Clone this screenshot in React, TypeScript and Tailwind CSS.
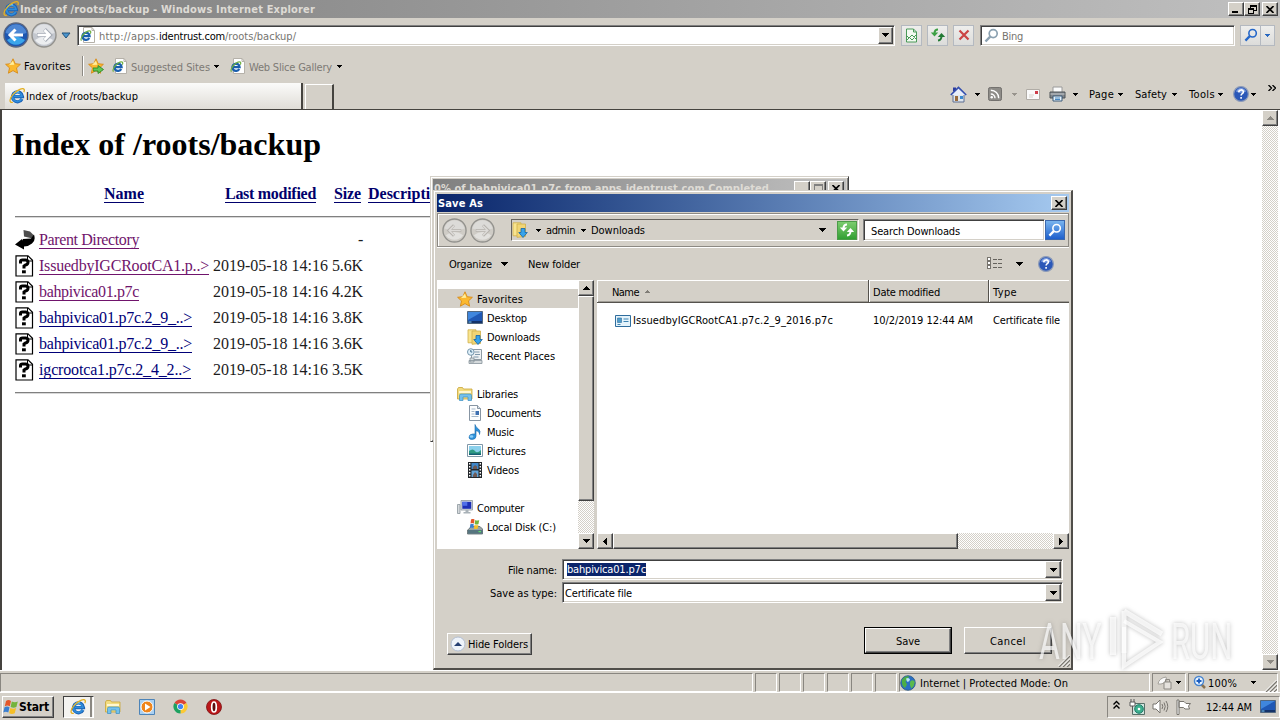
import { useLayoutEffect, useRef, useState } from "react";
import type { ReactNode } from "react";

const UI = "font-['DejaVu_Sans_Condensed','DejaVu_Sans','Noto_Sans',sans-serif]";
const SERIF = "font-['Liberation_Serif',serif]";
const RAISED =
  "bg-[#d4d0c8] border border-t-white border-l-white border-r-[#404040] border-b-[#404040] shadow-[inset_-1px_-1px_0_#808080]";
const SUNKEN =
  "bg-white border border-t-[#808080] border-l-[#808080] border-r-white border-b-white shadow-[inset_1px_1px_0_#404040,inset_-1px_-1px_0_#d4d0c8]";
const DITHER = "bg-[repeating-conic-gradient(#ffffff_0_25%,#d4d0c8_0_50%)] bg-[length:2px_2px]";

/* Text run that is tracked to occupy exactly w pixels. */
function T({ w, className = "", children }: { w: number; className?: string; children: ReactNode }) {
  const ref = useRef<HTMLSpanElement>(null);
  const [spacing, setSpacing] = useState(0);
  useLayoutEffect(() => {
    const el = ref.current;
    if (!el) return;
    const count = el.textContent?.length || 1;
    setSpacing((w - el.getBoundingClientRect().width) / count);
  }, [w]);
  return (
    <span ref={ref} className={`inline-block shrink-0 whitespace-pre ${className}`} style={{ letterSpacing: spacing }}>
      {children}
    </span>
  );
}

function Tri({ dir = "down", className = "text-black" }: { dir?: "down" | "up" | "left" | "right"; className?: string }) {
  const d = {
    down: "M0 0h7L3.5 4z",
    up: "M0 4h7L3.5 0z",
    left: "M4 0v7L0 3.5z",
    right: "M0 0v7l4-3.5z",
  }[dir];
  const side = dir === "left" || dir === "right";
  return (
    <svg className={`shrink-0 ${className}`} width={side ? 4 : 7} height={side ? 7 : 4} fill="currentColor" shapeRendering="crispEdges">
      <path d={d} />
    </svg>
  );
}

function SmallTri({ className = "" }: { className?: string }) {
  return (
    <svg className={`shrink-0 ${className}`} width="5" height="3" fill="currentColor" shapeRendering="crispEdges">
      <path d="M0 0h5L2.5 3z" />
    </svg>
  );
}

function IE({ size = 16 }: { size?: number }) {
  return (
    <svg className="shrink-0" width={size} height={size} viewBox="0 0 16 16" fill="none">
      <path d="M13 11A5 5 0 1 1 13.500 8.600H4.600" stroke="#1c62b4" strokeWidth="3.200" />
      <path d="M12.700 10.600A4.700 4.700 0 1 1 13 8.300H5" stroke="#2f8ddb" strokeWidth="1.700" />
      <path d="M4.200 6.600a4.400 4.400 0 0 1 5.800-2.600" stroke="#7fd0f8" strokeWidth="1.200" />
      <path d="M3.800 14.300C-.2 15.200.2 10.200 4.800 5.600S14.200-.4 15.200 1.500c.3.800.1 1.600-.4 2.600" stroke="#e3b023" strokeWidth="1.300" />
    </svg>
  );
}

function IEPage() {
  return (
    <svg className="shrink-0" width="16" height="16" viewBox="0 0 16 16" fill="none">
      <path d="M3.500.5h8.500l2.500 3v12h-11z" fill="#fff" stroke="#b5b1a9" />
      <path d="M12 .5v3h2.500" stroke="#b5b1a9" />
      <path d="M9.200 11A3.600 3.600 0 1 1 9.600 9.200H3.400" stroke="#1b5fae" strokeWidth="2.300" />
      <path d="M1.600 13.600C-.2 12.400 2.600 7.200 6.300 5S11.600 4.200 10.300 6.600" stroke="#6cae3e" strokeWidth="1.200" />
    </svg>
  );
}

function Star({ size = 16 }: { size?: number }) {
  return (
    <svg className="shrink-0" width={size} height={size} viewBox="0 0 16 16">
      <path d="M8 .8l2.200 4.900 5.200.6-3.900 3.600 1.100 5.300L8 12.600l-4.600 2.600 1.100-5.300L.6 6.300l5.200-.6z" fill="#fbb92f" stroke="#d78a17" strokeWidth=".9" />
      <path d="M8 2.800l1.300 3.900L4 7z" fill="#ffef9c" />
    </svg>
  );
}

function Folder({ arrow = false, library = false }: { arrow?: boolean; library?: boolean }) {
  return (
    <svg className="shrink-0" width="16" height="16" viewBox="0 0 16 16">
      {library ? (
        <>
          <path d="M.5 3l1-1.500h4l1 1.500h8.500V13H.5z" fill="#f2dc80" stroke="#c9a437" strokeWidth=".8" />
          <path d="M2 5h12v2H2z" fill="#fff7cf" />
          <path d="M2.500 14.500V9.500q0-1.500 1.500-1.500h9q1.500 0 1.500 1.500v5h-3.500V11H6v3.500z" fill="#74c1ec" stroke="#3b8fc2" strokeWidth=".7" />
        </>
      ) : (
        <>
          <path d="M1 .8h8v13H1z" fill="#f8e48f" stroke="#cfaf49" strokeWidth=".8" />
          <path d="M5 2h8.500v12.500L5 15.300z" fill="#f1d575" stroke="#cfaf49" strokeWidth=".8" />
        </>
      )}
      {arrow && <path d="M9 6.500h4v4h2.300L11 15.500 6.800 10.500H9z" fill="#37a3ea" stroke="#1464a8" strokeWidth=".8" />}
    </svg>
  );
}

function Help() {
  return (
    <svg className="shrink-0" width="16" height="16" viewBox="0 0 16 16">
      <circle cx="8" cy="8" r="7.400" fill="#2b58b8" stroke="#8d9bb8" strokeWidth="1.200" />
      <path d="M3 5.500a5.300 5.300 0 0 1 10 0Q8 8 3 5.500z" fill="#7f9fe0" />
      <path d="M5.800 6.200c0-3 4.600-3 4.600-.2 0 1.700-2.300 1.700-2.300 3.500M8.100 11v1.700" stroke="#fff" strokeWidth="1.600" fill="none" />
    </svg>
  );
}

function Lens({ color = "#2467c9", size = 15 }: { color?: string; size?: number }) {
  return (
    <svg className="shrink-0" width={size} height={size} viewBox="0 0 15 15" fill="none">
      <circle cx="9.200" cy="5.600" r="4" stroke={color} strokeWidth="1.700" />
      <path d="M6.200 8.700L1.500 13.500" stroke={color} strokeWidth="2.400" />
    </svg>
  );
}

function Swap({ a, b }: { a: string; b: string }) {
  return (
    <svg className="shrink-0" width="16" height="14" viewBox="0 0 16 14">
      <path d="M8 1.500Q4.500 1.500 4.500 5.500" fill="none" stroke={a} strokeWidth="2" />
      <path d="M.8 4.500h7.400L4.500 8.500z" fill={a} />
      <path d="M7.800 9h7.400L11.500 5z" fill={b} />
      <path d="M11.500 8q0 4-3.500 4.500" fill="none" stroke={b} strokeWidth="2" />
    </svg>
  );
}

function Orb({ blue = false, size = 26, muted = false, back = false }: { blue?: boolean; size?: number; muted?: boolean; back?: boolean }) {
  const fill = blue ? "#1d56b0" : muted ? "#cfccc6" : "#c3c7ce";
  const upper = blue ? "#4d86d3" : muted ? "#dcdbd8" : "#dfe1e4";
  const lower = blue ? "#3aa5ea" : muted ? "#e2e1de" : "#eceef0";
  return (
    <svg className="shrink-0" width={size} height={size} viewBox="0 0 26 26">
      <circle cx="13" cy="13" r="12" fill={fill} stroke={blue ? "#5a6680" : "#93928e"} strokeWidth="1.400" />
      <path d="M2.500 11a10.700 10.700 0 0 1 21 0q-10 4-21 0z" fill={upper} />
      <path d="M4 18q9-7 18 0a11 11 0 0 1-18 0z" fill={lower} />
      <path
        d={back ? "M20 13H8M12.500 7.500L7 13l5.500 5.500" : "M6 13h12M13.500 7.500L19 13l-5.500 5.500"}
        fill="none"
        stroke={muted ? "#b5b2ad" : blue ? "#fff" : "#a3a9b3"}
        strokeWidth={blue ? 3 : muted ? 3 : 4}
      />
      {!blue && (
        <path
          d={back ? "M19.500 13H8M12.500 8L7.500 13l5 5" : "M6.500 13h12M13.500 8l5 5-5 5"}
          fill="none"
          stroke={muted ? "#dddbd8" : "#fff"}
          strokeWidth={muted ? 1.6 : 2.6}
        />
      )}
    </svg>
  );
}

function FlagLogo({ size = 16 }: { size?: number }) {
  return (
    <svg className="shrink-0" width={size} height={size} viewBox="0 0 16 16">
      <path d="M3 2q2.500-1.800 5 0L6.800 7.300q-2.300-1.700-5 0z" fill="#e4572a" />
      <path d="M8.800 2.500q3 1.600 6 0L13.400 8q-2.800 1.500-5.800 0z" fill="#74b43b" />
      <path d="M1.500 8.300q2.600-1.600 5 0L5.300 13.500q-2.600-1.700-5 0z" fill="#3a7fd0" />
      <path d="M7.300 9q3 1.500 5.800 0l-1.400 5.300q-2.800 1.500-5.600 0z" fill="#f5bf28" />
    </svg>
  );
}

function Desktop() {
  return (
    <svg className="shrink-0" width="16" height="13" viewBox="0 0 16 13">
      <path d="M.5.5h15v12H.5z" fill="#1f58b5" stroke="#51677f" />
      <path d="M1 1h14L1 9z" fill="#3f86dd" />
      <path d="M1 10h14v2H1z" fill="#14336a" />
      <path d="M1.500 10.500h3v1h-3z" fill="#7fd3ff" />
    </svg>
  );
}

function Recent() {
  return (
    <svg className="shrink-0" width="16" height="16" viewBox="0 0 16 16">
      <path d="M4.500 1.500h10v10h-10z" fill="#eef1f3" stroke="#8f9ba3" />
      <path d="M7.500 4h5M8 6.500h5M6.500 9h5" stroke="#7e97aa" />
      <circle cx="3.800" cy="4" r="3.300" fill="#dff0fa" stroke="#7797ad" />
      <path d="M3.800 2v2h1.500" stroke="#3f6a88" fill="none" />
      <path d="M2 12.500h13v3H2zM3 10h4v4H3z" fill="#d5dadc" stroke="#87939a" strokeWidth=".8" />
    </svg>
  );
}

function Doc() {
  return (
    <svg className="shrink-0" width="16" height="16" viewBox="0 0 16 16">
      <path d="M2.500.5h8l3 3v12h-11z" fill="#fcfdfe" stroke="#8795a3" />
      <path d="M10.500.5v3h3" fill="#dbe4ec" stroke="#8795a3" />
      <path d="M4.500 4h4M4.500 6.500h3M4.500 9h3M4.500 11.500h7" stroke="#a5b8c9" />
      <path d="M8.500 6h3.500v4H8.500z" fill="#3c6fb0" />
    </svg>
  );
}

function Music() {
  return (
    <svg className="shrink-0" width="16" height="16" viewBox="0 0 16 16">
      <path d="M8 .5q.5 2.500 3.500 4.500 2.500 2 1 5.500.3-3-3.500-3.800v5.500q0 3-3.800 3.300-3.200 0-3.200-2.300 0-3 4-3.300 1.200 0 2 .1z" fill="#2f93dc" stroke="#1c6aa9" strokeWidth=".6" />
      <ellipse cx="4.500" cy="12.500" rx="1.800" ry="1.200" fill="#8cd0f8" />
    </svg>
  );
}

function Pictures() {
  return (
    <svg className="shrink-0" width="16" height="13" viewBox="0 0 16 13">
      <path d="M.5.5h15v12H.5z" fill="#fff" stroke="#7f97a8" />
      <path d="M2 2h12v9H2z" fill="#8ad0ec" />
      <path d="M2 7q4-3 6 0t6-1v5H2z" fill="#2e9a83" />
      <path d="M2 9.500h12V11H2z" fill="#155f74" />
    </svg>
  );
}

function Videos() {
  return (
    <svg className="shrink-0" width="14" height="16" viewBox="0 0 14 16">
      <path d="M0 0h14v16H0z" fill="#23272b" />
      <path d="M3.500 1h7v6h-7z" fill="#3f86c8" />
      <path d="M3.500 8.500h7V15h-7z" fill="#63a4d8" />
      <path d="M5 5l2-2 2 1.500V7H5zM5 13l2-3 2 2v3H5z" fill="#6f5a55" />
      <path d="M1.700 1v14M12.300 1v14" stroke="#fff" strokeWidth="1.400" strokeDasharray="1.500 1.500" />
    </svg>
  );
}

function Computer() {
  return (
    <svg className="shrink-0" width="16" height="15" viewBox="0 0 16 15">
      <path d="M.5 4.500h2.500v9H.5z" fill="#d6dadd" stroke="#8b959c" strokeWidth=".8" />
      <path d="M4 .5h11.500v9.500H4z" fill="#dde1e4" stroke="#8b959c" strokeWidth=".8" />
      <path d="M5.300 1.800h9v7h-9z" fill="#1c2fb5" />
      <path d="M5.300 1.800h5v4h-5z" fill="#4f6fe8" />
      <path d="M8.500 10h3v2h2v1.500h-7V12h2z" fill="#a9b2b8" />
    </svg>
  );
}

function Disk() {
  return (
    <svg className="shrink-0" width="16" height="16" viewBox="0 0 16 16">
      <path d="M2 10l2-2.500h9L15.500 10v5H.5v-4z" fill="#98a4a6" stroke="#5c696c" strokeWidth=".8" />
      <path d="M1 11h14.500v3.700H1z" fill="#56757f" />
      <path d="M11.500 12h2.500v1.200h-2.500z" fill="#5ee06a" />
      <path d="M4 .5q1.800-1.200 3.500 0L7 4.500q-1.800-1-3.500 0z" fill="#e4572a" />
      <path d="M8.200 1q2 1 4 0L11.500 5q-2 1-3.800 0z" fill="#74b43b" />
      <path d="M3.300 5.200q1.700-1 3.500 0l-.5 3.800q-1.800-1-3.500 0z" fill="#3a7fd0" />
      <path d="M7.500 5.800q2 1 4 0l-.8 3.700q-2 1-3.800 0z" fill="#f5bf28" />
    </svg>
  );
}

function Globe() {
  return (
    <svg className="shrink-0" width="16" height="16" viewBox="0 0 16 16">
      <circle cx="8" cy="8" r="7.300" fill="#2a6fc4" stroke="#2b5580" strokeWidth=".8" />
      <path d="M2 5Q5 .5 9 1.500 8 5 5.500 6.500L7 9.500 5 13Q1 10 2 5z" fill="#4cae45" />
      <path d="M10.500 6q3-2 4.300 1-.3 4-3.300 6.500Q9 10 10.500 6z" fill="#5cba4c" />
      <path d="M6 3.500q3-1.500 4 1-1 3-3 2z" fill="#b9e6f8" />
    </svg>
  );
}

function Unknown() {
  return (
    <svg className="shrink-0" width="20" height="22" viewBox="0 0 20 22">
      <path d="M1 .8h12l4.500 4.500V21H1z" fill="#fff" stroke="#000" strokeWidth="1.200" />
      <path d="M12.500 1v5h5" fill="none" stroke="#000" />
      <path d="M5.500 8.500V6.500Q5.500 5 7.500 5h3q2.500 0 2.500 2.300T10.500 10L9 11v2.500" fill="none" stroke="#000" strokeWidth="3" />
      <path d="M7 15.300h3.800v3H7z" />
    </svg>
  );
}

function Back() {
  return (
    <svg className="shrink-0" width="20" height="22" viewBox="0 0 20 22">
      <path d="M8.500 1l6.500 1.500 4 4-1.500 3-8.500-2z" fill="#4c4c4c" />
      <path d="M19 5.500q2 6-2 9-3.500 3-8 3v3L0 15.500 7 10v3q-.5-1.500 1-3l8-.5z" fill="#000" />
    </svg>
  );
}

function CertFile() {
  return (
    <svg className="shrink-0" width="16" height="12" viewBox="0 0 16 12">
      <path d="M.5.500h15v11H.5z" fill="#e4f3fb" stroke="#2f6d9d" />
      <path d="M2.500 3h4v4.500h-4z" fill="#4f9cc9" stroke="#2f6d9d" strokeWidth=".6" />
      <path d="M8.500 4h5M8.500 6.500h5M2.500 9.500h3" stroke="#3d83b2" />
    </svg>
  );
}

function Close({ size = 8 }: { size?: number }) {
  return (
    <svg width={size} height="7" viewBox="0 0 8 7">
      <path d="M.5 0L7.500 7M7.500 0L.5 7" stroke="#000" strokeWidth="1.600" />
    </svg>
  );
}

function TitleBar() {
  return (
    <div className="flex h-[18px] shrink-0 items-center bg-gradient-to-r from-[#808080] to-[#c0c0c0] pl-[3px] pr-[2px]">
      <IE />
      <T w={295} className="ml-px text-[11px] font-bold text-[#dedbd5]">Index of /roots/backup - Windows Internet Explorer</T>
      <div className="ml-auto flex h-[14px]">
        <div className={`flex w-[16px] items-end justify-start pb-[2px] pl-[3px] ${RAISED}`}><div className="h-[2px] w-[6px] bg-black" /></div>
        <div className={`flex w-[16px] items-center justify-center ${RAISED}`}>
          <svg width="9" height="9" shapeRendering="crispEdges">
            <path d="M2 0h7v6H6v3H0V3h2zM3 2v1h3v2h2V2zM1 5v3h4V5z" fillRule="evenodd" />
          </svg>
        </div>
        <div className={`ml-[2px] flex w-[16px] items-center justify-center ${RAISED}`}><Close /></div>
      </div>
    </div>
  );
}

const NAVBTN = "flex h-[21px] items-center justify-center border border-[#b4b9c0] bg-gradient-to-b from-[#eeeeec] to-[#dcdcda]";

function NavRow() {
  return (
    <div className="flex h-[33px] shrink-0 items-center pl-[3px] pt-[1px]">
      <Orb blue back />
      <div className="ml-[2px] flex"><Orb /></div>
      <svg className="ml-[4px] shrink-0" width="10" height="7"><path d="M1 1h8L5 6z" fill="#4b96cf" stroke="#23537d" /></svg>
      <div className={`ml-[6px] flex h-[21px] w-[818px] items-center pl-[2px] pr-px ${SUNKEN}`}>
        <IEPage />
        <T w={60} className="ml-[3px] pt-[2px] text-[11px] text-[#76746f]">http://apps.</T>
        <T w={66} className="pt-[2px] text-[11px] text-black">identrust.com</T>
        <T w={71} className="pt-[2px] text-[11px] text-[#76746f]">/roots/backup/</T>
        <div className={`ml-auto flex h-[17px] w-[15px] items-center justify-center ${RAISED}`}><Tri /></div>
      </div>
      <div className={`ml-[6px] w-[21px] ${NAVBTN}`}>
        <svg width="13" height="15" fill="none"><path d="M1.500 1h7l3 3v10h-10z" fill="#f3faf1" stroke="#4a9a58" /><path d="M8.500 1v3h3M2 8l2 2 3-3 2 2 2-2M2 12l2.500-2.500L7 12l2.500-2.500L11 11" stroke="#4a9a58" /></svg>
      </div>
      <div className={`ml-[5px] w-[21px] ${NAVBTN}`}><Swap a="#3da044" b="#227a34" /></div>
      <div className={`ml-[5px] w-[21px] ${NAVBTN}`}>
        <svg width="12" height="12"><path d="M1.500 1.500l9 9M10.500 1.500l-9 9" stroke="#cb4545" strokeWidth="2.200" /></svg>
      </div>
      <div className={`ml-[6px] flex h-[21px] w-[255px] items-center pl-[3px] ${SUNKEN}`}>
        <Lens color="#8ba1b1" />
        <T w={21} className="ml-[3px] pt-[2px] text-[11px] text-[#76746f]">Bing</T>
      </div>
      <div className={`ml-[5px] w-[21px] ${NAVBTN}`}><Lens size={14} /></div>
      <div className={`w-[14px] border-l-0 ${NAVBTN}`}><SmallTri className="text-[#2868c0]" /></div>
    </div>
  );
}

function FavRow() {
  return (
    <div className="flex h-[30px] shrink-0 items-center pl-[5px] text-[11px] text-[#7d7a75]">
      <Star />
      <T w={47} className="ml-[3px] text-black">Favorites</T>
      <div className="ml-[11px] h-[20px] w-[2px] border-l border-[#8c8983] bg-white" />
      <div className="ml-[4px] flex items-center">
        <Star />
        <svg className="-ml-[11px] mt-[6px]" width="11" height="9"><path d="M0 3h5V.5L10.500 4.500 5 8.500V6H0z" fill="#62c653" stroke="#2c8a28" strokeWidth=".9" /></svg>
      </div>
      <div className="ml-[8px] flex"><IEPage /></div>
      <T w={79} className="ml-[3px] pt-[2px]">Suggested Sites</T>
      <SmallTri className="ml-[4px] text-black" />
      <div className="ml-[11px] flex"><IEPage /></div>
      <T w={83} className="ml-[3px] pt-[2px]">Web Slice Gallery</T>
      <SmallTri className="ml-[5px] text-black" />
    </div>
  );
}

function Printer() {
  return (
    <svg className="shrink-0" width="17" height="16" viewBox="0 0 17 16">
      <path d="M4 1h9v6H4z" fill="#fbfbfb" stroke="#9a9a9a" />
      <path d="M1 6h15v6H1z" fill="#80868c" stroke="#4f5459" />
      <path d="M1.500 8h14" stroke="#c6cace" />
      <path d="M4 10h9v5H4z" fill="#e4f2fb" stroke="#3c5b78" />
      <path d="M6 12h5M6 13.500h5" stroke="#4a88c0" />
    </svg>
  );
}

function TabRow() {
  return (
    <div className="flex h-[28px] shrink-0 items-end pl-[5px] text-[11px]">
      <div className="flex h-[26px] w-[298px] items-center border-r-2 border-[#45433f] bg-gradient-to-b from-[#fbfbfa] to-[#e0ddd7] pl-[4px]">
        <IE />
        <T w={112} className="ml-px">Index of /roots/backup</T>
      </div>
      <div className="ml-[2px] h-[25px] w-[29px] border border-b-0 border-r-2 border-t-white border-l-white border-r-[#45433f]" />
      <div className="mb-[1px] ml-[616px] flex h-[28px] items-center">
        <svg className="shrink-0" width="17" height="17" viewBox="0 0 17 17">
          <path d="M3 8v8h11V8" fill="#dfe6ee" stroke="#5d6f92" />
          <path d="M3 1.500h3v4H3z" fill="#2c3ca0" />
          <path d="M.8 9l7.700-7.500L16.200 9" fill="#e8eefa" stroke="#354fae" strokeWidth="1.700" />
          <path d="M5 10h3v5H5z" fill="#9a6b3b" /><path d="M10 10h3v3h-3z" fill="#3a89d0" />
        </svg>
        <SmallTri className="ml-[8px]" />
        <svg className="ml-[8px] shrink-0" width="14" height="14" viewBox="0 0 15 15">
          <rect x=".5" y=".5" width="14" height="14" rx="2" fill="#8e8c88" stroke="#6d6b68" />
          <path d="M3 7.500a4.500 4.500 0 0 1 4.500 4.500M3 3.500A8.500 8.500 0 0 1 11.500 12" fill="none" stroke="#fff" strokeWidth="1.500" /><circle cx="4" cy="11" r="1.300" fill="#fff" />
        </svg>
        <SmallTri className="ml-[10px] text-[#98948d]" />
        <svg className="ml-[9px] shrink-0" width="14" height="11"><path d="M.5.500h13v10H.5z" fill="#fafafa" stroke="#b0aca6" /><path d="M9 2h3v3H9z" fill="#cf3e4a" /><path d="M3 6h5M3 8h4" stroke="#d5d2cc" /></svg>
        <div className="ml-[9px] flex"><Printer /></div>
        <SmallTri className="ml-[7px]" />
        <T w={25} className="ml-[11px]">Page</T>
        <SmallTri className="ml-[4px]" />
        <T w={32} className="ml-[12px]">Safety</T>
        <SmallTri className="ml-[5px]" />
        <T w={26} className="ml-[12px]">Tools</T>
        <SmallTri className="ml-[3px]" />
        <div className="ml-[10px] flex"><Help /></div>
        <SmallTri className="ml-[2px]" />
        <svg className="mb-[13px] ml-[12px] shrink-0" width="8" height="6"><path d="M.5 0l3 3-3 3M4.500 0l3 3-3 3" fill="none" stroke="#000" strokeWidth="1.300" /></svg>
      </div>
    </div>
  );
}

const rows = [
  { name: "IssuedbyIGCRootCA1.p..>", w: 170, size: "5.6K", visited: true },
  { name: "bahpivica01.p7c", w: 100, size: "4.2K", visited: true },
  { name: "bahpivica01.p7c.2_9_..>", w: 153, size: "3.8K" },
  { name: "bahpivica01.p7c.2_9_..>", w: 153, size: "3.6K" },
  { name: "igcrootca1.p7c.2_4_2..>", w: 152, size: "3.5K" },
];

const HEADLINK = "border-b border-[#00006c] leading-[16px]";

function Listing() {
  return (
    <div className={`flex min-w-0 flex-1 flex-col pl-[9px] text-[16px] text-[#1c1c1c] ${SERIF}`}>
      <h1 className="mt-[16px] flex h-[36px] items-center pl-px text-[32px] font-bold text-black"><T w={309}>Index of /roots/backup</T></h1>
      <div className="mt-[23px] flex h-[19px] items-center pl-[93px] font-bold text-[#00006c]">
        <T w={40} className={HEADLINK}>Name</T>
        <T w={91} className={`ml-[81px] ${HEADLINK}`}>Last modified</T>
        <T w={27} className={`ml-[18px] ${HEADLINK}`}>Size</T>
        <T w={79} className={`ml-[7px] ${HEADLINK}`}>Description</T>
      </div>
      <div className="ml-[4px] mt-[12px] h-[2px] w-[435px] border-b border-[#d8d8d8] bg-[#808080]" />
      <div className="ml-[4px] mt-[9px] flex h-[26px] items-center">
        <Back />
        <T w={100} className="ml-[4px] border-b border-[#70146c] leading-[16px] text-[#70146c]">Parent Directory</T>
        <span className="ml-[219px]">-</span>
      </div>
      {rows.map((r, i) => (
        <div key={i} className="ml-[4px] flex h-[26px] items-center">
          <Unknown />
          <div className="ml-[4px] flex w-[174px]">
            <T w={r.w} className={r.visited ? "border-b border-[#70146c] leading-[16px] text-[#70146c]" : "border-b border-[#000078] leading-[16px] text-[#000078]"}>{r.name}</T>
          </div>
          <T w={115}>2019-05-18 14:16</T>
          <T w={31} className="ml-[4px]">{r.size}</T>
        </div>
      ))}
      <div className="ml-[4px] mt-[9px] h-[2px] w-[435px] border-b border-[#d8d8d8] bg-[#808080]" />
    </div>
  );
}

function Content() {
  return (
    <div className="flex h-[561px] shrink-0 border-l-2 border-t border-[#45433f] bg-white">
      <Listing />
      <div className={`mr-[2px] flex w-[16px] flex-col justify-between ${DITHER}`}>
        <div className={`flex h-[16px] items-center justify-center ${RAISED}`}><Tri dir="up" className="text-[#8c8983]" /></div>
        <div className={`flex h-[16px] items-center justify-center ${RAISED}`}><Tri className="text-[#8c8983]" /></div>
      </div>
    </div>
  );
}

const CELL = "flex h-[19px] items-center border border-t-[#898680] border-l-[#898680] border-r-white border-b-white";

function Grip() {
  return (
    <svg width="12" height="12" className="shrink-0">
      <path d="M1 12L12 1M5 12l7-7M9 12l3-3" stroke="#7c7973" strokeWidth="1.400" />
      <path d="M0 11.500L11.500 0M4 11.500L12 3.500M8 11.500l4-4" stroke="#fff" />
    </svg>
  );
}

function StatusBar() {
  return (
    <div className="flex h-[22px] shrink-0 items-center gap-[2px] border-t border-white pt-[2px] text-[11px]">
      <div className={`w-[753px] ${CELL}`} />
      {[0, 1, 2, 3, 4, 5].map((i) => <div key={i} className={`w-[22px] ${CELL}`} />)}
      <div className={`w-[251px] ${CELL}`}>
        <Globe />
        <T w={148} className="ml-[4px] pt-[2px]">Internet | Protected Mode: On</T>
      </div>
      <div className={`w-[34px] pl-[4px] ${CELL}`}>
        <svg width="16" height="15"><path d="M1 9q1-6 8-7l1 5-6 2z" fill="#fafafa" stroke="#a5a29c" /><path d="M7 7h7v7H7z" fill="#e5e2dd" stroke="#8c8983" /><path d="M8.500 7V4.500h4V7" fill="none" stroke="#8c8983" /></svg>
        <SmallTri className="ml-[3px]" />
      </div>
      <div className={`w-[90px] pl-[4px] ${CELL}`}>
        <svg width="14" height="15"><path d="M7 8l5 5" stroke="#8a7352" strokeWidth="2.500" /><circle cx="6" cy="6" r="4.500" fill="#eaf5ff" stroke="#4784cf" strokeWidth="1.500" /><path d="M3.500 6h5M6 3.500v5" stroke="#1b5dc0" strokeWidth="1.800" /></svg>
        <T w={29} className="ml-px pt-[2px]">100%</T>
        <SmallTri className="ml-[14px]" />
        <div className="ml-auto mt-[6px] flex"><Grip /></div>
      </div>
    </div>
  );
}

function Taskbar() {
  return (
    <div className="flex flex-1 items-center border-t border-white">
      <div className={`ml-[2px] flex h-[22px] w-[52px] items-center ${RAISED}`}>
        <FlagLogo />
        <T w={30} className="pt-px text-[12px] font-bold">Start</T>
      </div>
      <div className="ml-[9px] flex h-[22px] w-[31px] items-center border border-b-white border-r-white border-l-[#404040] border-t-[#404040] bg-[#f4f3f0] pl-[6px]">
        <IE />
        <div className="ml-auto mr-px h-full w-[2px] bg-[#8a8781]" />
      </div>
      <div className="ml-[11px] flex"><Folder library /></div>
      <svg className="ml-[18px] shrink-0" width="16" height="16"><path d="M.5.500h15v15H.5z" fill="#a9d0f2" stroke="#4d84b8" /><circle cx="8" cy="8" r="6" fill="#ef851c" stroke="#fff" /><path d="M6 4.500L11.500 8 6 11.500z" fill="#fff" /></svg>
      <svg className="ml-[18px] shrink-0" width="15" height="15" viewBox="0 0 16 16">
        <path d="M8 8L1.500 4.200A7.500 7.500 0 0 1 14.500 4.200z" fill="#db4437" />
        <path d="M8 8l6.500-3.800A7.500 7.500 0 0 1 8 15.500z" fill="#fcc934" />
        <path d="M8 8v7.500A7.500 7.500 0 0 1 1.500 4.200z" fill="#1da160" />
        <circle cx="8" cy="8" r="3.600" fill="#fff" /><circle cx="8" cy="8" r="2.800" fill="#4285f4" />
      </svg>
      <svg className="ml-[18px] shrink-0" width="16" height="16"><circle cx="8" cy="8" r="7.500" fill="#bb1719" stroke="#7b1011" strokeWidth=".8" /><ellipse cx="8" cy="8" rx="2.300" ry="5" fill="#5e0d0e" stroke="#fff" strokeWidth="1.700" /></svg>
      <div className="ml-auto flex h-[22px] w-[173px] items-center border border-b-white border-r-white border-l-[#898680] border-t-[#898680] pl-[5px] text-[11px]">
        <svg width="7" height="10" className="mb-[3px] shrink-0"><path d="M.5 4.500l3-3 3 3M.5 8.500l3-3 3 3" fill="none" stroke="#000" strokeWidth="1.400" /></svg>
        <svg className="ml-[9px] shrink-0" width="16" height="16"><path d="M3.500 4.500h12v11h-12z" fill="#cfe5de" stroke="#577069" /><circle cx="10" cy="10" r="4.300" fill="#3cb08e" stroke="#1f7a68" /><circle cx="10" cy="10" r="1.300" fill="#fff" /><path d="M1 3h5v4H1zM2 0v3M5 0v3M3.500 7v6" fill="#fff" stroke="#5a5a5a" /></svg>
        <svg className="ml-[7px] shrink-0" width="17" height="15" fill="none" stroke="#77746e"><path d="M1 5h3l4-4v13l-4-4H1z" fill="#fff" /><path d="M10 5q1.500 2.500 0 5M12 3.500q2.500 4 0 8M14 2q3.500 5.500 0 11" /></svg>
        <svg className="ml-[7px] shrink-0" width="15" height="16" fill="#fff" stroke="#77746e"><path d="M1 1h2v14.500H1zM3 2.500h5l2 2h4.500l-2 2.500 1 3H9L7.500 8.500H3z" /></svg>
        <T w={46} className="ml-[15px] pt-[2px]">12:44 AM</T>
        <div className="ml-[8px] flex"><Desktop /></div>
      </div>
    </div>
  );
}

function DownloadWindow() {
  return (
    <div className="absolute left-[430px] top-[176px] h-[266px] w-[419px] border border-l-[#d4d0c8] border-t-[#d4d0c8] border-b-[#404040] border-r-[#404040] bg-[#d4d0c8] p-[2px] shadow-[inset_1px_1px_0_#fff,inset_-1px_-1px_0_#808080]">
      <div className="flex h-[18px] items-center bg-gradient-to-r from-[#808080] to-[#c0c0c0] pr-[2px]">
        <T w={335} className="ml-px text-[11px] font-bold text-[#dedbd5]">0% of bahpivica01.p7c from apps.identrust.com Completed</T>
        <div className="ml-auto flex h-[14px]">
          <div className={`w-[16px] ${RAISED}`} />
          <div className={`flex w-[16px] items-center justify-center ${RAISED}`}><div className="h-[8px] w-[9px] border border-t-2 border-[#808080]" /></div>
          <div className={`ml-[2px] flex w-[16px] items-center justify-center ${RAISED}`}><Close /></div>
        </div>
      </div>
    </div>
  );
}

const tree: ({ icon: ReactNode; label: string; w: number; root?: boolean } | null)[] = [
  { icon: <Star />, label: "Favorites", w: 46, root: true },
  { icon: <Desktop />, label: "Desktop", w: 40 },
  { icon: <Folder arrow />, label: "Downloads", w: 53 },
  { icon: <Recent />, label: "Recent Places", w: 68 },
  null,
  { icon: <Folder library />, label: "Libraries", w: 41, root: true },
  { icon: <Doc />, label: "Documents", w: 54 },
  { icon: <Music />, label: "Music", w: 27 },
  { icon: <Pictures />, label: "Pictures", w: 39 },
  { icon: <Videos />, label: "Videos", w: 32 },
  null,
  { icon: <Computer />, label: "Computer", w: 47, root: true },
  { icon: <Disk />, label: "Local Disk (C:)", w: 69 },
];

function FolderTree() {
  return (
    <div className="flex w-[157px] shrink-0 bg-white">
      <div className="flex w-[141px] flex-col pl-px pt-[9px]">
        {tree.map((n, i) => (
          <div key={i} className={`flex h-[19px] items-center ${n?.root ? "pl-[19px]" : "pl-[29px]"} ${i === 0 ? "bg-[#d4d0c8]" : ""}`}>
            {n && (
              <>
                <div className="flex w-[16px] shrink-0 justify-center">{n.icon}</div>
                <T w={n.w} className="ml-[4px] pt-[2px]">{n.label}</T>
              </>
            )}
          </div>
        ))}
      </div>
      <div className={`flex w-[16px] flex-col ${DITHER}`}>
        <div className={`flex h-[16px] items-center justify-center ${RAISED}`}><Tri dir="up" /></div>
        <div className={`h-[205px] ${RAISED}`} />
        <div className={`mt-auto flex h-[16px] items-center justify-center ${RAISED}`}><Tri /></div>
      </div>
    </div>
  );
}

const COLHEAD = "flex h-[23px] items-center border-b border-r border-[#55524d] bg-[#d4d0c8] pt-[2px] shadow-[inset_1px_1px_0_#fff,inset_0_-1px_0_#a09d96]";

function FileList() {
  return (
    <div className="ml-[3px] mr-px flex min-w-0 flex-1 flex-col bg-white">
      <div className="flex">
        <div className={`w-[272px] pl-[15px] ${COLHEAD}`}>
          <T w={27}>Name</T>
          <SmallTri className="mb-[2px] ml-[6px] rotate-180 text-[#807d77]" />
        </div>
        <div className={`w-[120px] pl-[4px] ${COLHEAD}`}><T w={67}>Date modified</T></div>
        <div className={`flex-1 border-r-0 pl-[4px] ${COLHEAD}`}><T w={24}>Type</T></div>
      </div>
      <div className="mt-[8px] flex h-[19px] items-center pl-[18px]">
        <CertFile />
        <T w={200} className="ml-[2px]">IssuedbyIGCRootCA1.p7c.2_9_2016.p7c</T>
        <T w={100} className="ml-[40px]">10/2/2019 12:44 AM</T>
        <T w={67} className="ml-[20px]">Certificate file</T>
      </div>
      <div className={`mt-auto flex h-[16px] ${DITHER}`}>
        <div className={`flex w-[16px] items-center justify-center ${RAISED}`}><Tri dir="left" /></div>
        <div className={`w-[345px] ${RAISED}`} />
        <div className={`ml-auto flex w-[16px] items-center justify-center ${RAISED}`}><Tri dir="right" /></div>
      </div>
    </div>
  );
}

function SaveDialog() {
  return (
    <div className={`absolute left-[433px] top-[190px] flex h-[480px] w-[640px] flex-col border border-b-2 border-r-2 border-l-[#d4d0c8] border-t-[#d4d0c8] border-b-[#504e4a] border-r-[#504e4a] bg-[#d4d0c8] pb-px pl-[3px] pr-px pt-[3px] text-[11px] shadow-[inset_1px_1px_0_#fff] ${UI}`}>
      <div className="mr-px flex h-[18px] shrink-0 items-center bg-gradient-to-r from-[#0a246a] to-[#a6caf0] pl-px pr-[2px]">
        <T w={45} className="font-bold text-white">Save As</T>
        <div className={`ml-auto flex h-[14px] w-[16px] items-center justify-center ${RAISED}`}><Close /></div>
      </div>
      <div className="mr-px mt-px flex h-[34px] shrink-0 items-center border border-[#8c8983] pl-[4px] shadow-[inset_1px_1px_0_#fff,0_1px_0_#fff]">
        <Orb muted back size={25} />
        <div className="ml-[3px] flex"><Orb muted size={25} /></div>
        <div className="ml-[16px] flex h-[22px] w-[348px] items-center border border-b-white border-r-white border-l-[#66635e] border-t-[#66635e] pr-px">
          <Folder arrow />
          <SmallTri className="ml-[8px]" />
          <T w={29} className="ml-[5px]">admin</T>
          <SmallTri className="ml-[6px]" />
          <T w={54} className="ml-[5px]">Downloads</T>
          <Tri className="ml-auto" />
          <div className="ml-[11px] flex h-[19px] w-[20px] items-center justify-center border border-[#4c9b48] bg-gradient-to-b from-[#7bcc6e] to-[#30a032]"><Swap a="#fff" b="#fff" /></div>
        </div>
        <div className={`ml-[4px] flex h-[22px] w-[182px] items-center pl-[7px] ${SUNKEN}`}><T w={89} className="pt-[2px]">Search Downloads</T></div>
        <div className="flex h-[20px] w-[20px] items-center justify-center border border-[#3b68ad] bg-gradient-to-b from-[#79b4ee] to-[#1e5fcc]"><Lens color="#fff" size={14} /></div>
      </div>
      <div className="flex h-[33px] shrink-0 items-center pl-[12px]">
        <T w={43} className="pt-[2px]">Organize</T>
        <Tri className="ml-[9px]" />
        <T w={52} className="ml-[20px] pt-[2px]">New folder</T>
        <svg className="ml-auto shrink-0" width="15" height="13" shapeRendering="crispEdges"><path d="M.5.500h3v3h-3zM.5 4.500h3v3h-3zM.5 8.500h3v3h-3z" fill="#fff" stroke="#77746e" /><path d="M6 2.500h4M11 2.500h4M6 6.500h4M11 6.500h4M6 10.500h4M11 10.500h4" stroke="#66635e" /></svg>
        <Tri className="ml-[14px]" />
        <div className="ml-[15px] mr-[16px] flex"><Help /></div>
      </div>
      <div className="flex h-[269px] shrink-0">
        <FolderTree />
        <FileList />
      </div>
      <div className="mt-[10px] flex shrink-0 items-center">
        <div className="flex w-[120px] justify-end"><T w={49} className="pt-[2px]">File name:</T></div>
        <div className={`ml-[5px] flex h-[21px] w-[501px] items-center pl-[4px] pr-px ${SUNKEN}`}>
          <T w={79} className="bg-[#0a246a] leading-[13px] text-white">bahpivica01.p7c</T>
          <div className={`ml-auto flex h-[17px] w-[16px] items-center justify-center ${RAISED}`}><Tri /></div>
        </div>
      </div>
      <div className="mt-[2px] flex shrink-0 items-center">
        <div className="flex w-[120px] justify-end"><T w={67} className="pt-[2px]">Save as type:</T></div>
        <div className={`ml-[5px] flex h-[21px] w-[501px] items-center pl-[2px] pr-px ${SUNKEN}`}>
          <T w={67} className="pt-[2px]">Certificate file</T>
          <div className={`ml-auto flex h-[17px] w-[16px] items-center justify-center ${RAISED}`}><Tri /></div>
        </div>
      </div>
      <div className="mt-auto flex items-end">
        <div className={`mb-[12px] ml-[10px] flex h-[22px] w-[85px] items-center pl-[2px] ${RAISED}`}>
          <svg className="shrink-0" width="16" height="16"><circle cx="8" cy="8" r="7" fill="#eef3fa" stroke="#b3bfd2" /><path d="M4 10l4-4 4 4z" fill="#253f73" /></svg>
          <T w={60} className="ml-[2px]">Hide Folders</T>
        </div>
        <div className="mb-[13px] ml-[332px] flex h-[27px] w-[88px] border border-black">
          <div className={`flex flex-1 items-center justify-center ${RAISED}`}><T w={24} className="pt-[2px]">Save</T></div>
        </div>
        <div className={`mb-[13px] ml-[12px] flex h-[27px] w-[88px] items-center justify-center ${RAISED}`}><T w={36} className="pt-[2px]">Cancel</T></div>
        <div className="ml-auto flex"><Grip /></div>
      </div>
    </div>
  );
}

function Watermark() {
  return (
    <div className="pointer-events-none absolute left-[1039px] top-[606px] flex h-[68px] w-[196px] items-center justify-between font-['Roboto',sans-serif] text-[50px] leading-none text-white/70 drop-shadow-[0_0_2px_rgba(90,90,90,0.5)]">
      <span className="w-[64px] origin-left scale-x-[0.64] pt-[3px]">ANY</span>
      <svg className="shrink-0" width="58" height="66" viewBox="0 0 58 66" fill="none" stroke="#fff" strokeOpacity=".75">
        <path d="M16 4L54 27M16 4v42" strokeWidth="5" />
        <path d="M16 14l36 21-36 24V20" strokeWidth="4" />
        <path d="M5 10v38" strokeWidth="6" />
      </svg>
      <span className="w-[64px] origin-left scale-x-[0.62] pt-[3px]">RUN</span>
    </div>
  );
}

export default function App() {
  return (
    <div className={`relative flex h-[720px] w-[1280px] flex-col overflow-hidden bg-[#d4d0c8] leading-none text-black ${UI}`}>
      <TitleBar />
      <NavRow />
      <FavRow />
      <TabRow />
      <Content />
      <StatusBar />
      <Taskbar />
      <DownloadWindow />
      <SaveDialog />
      <Watermark />
    </div>
  );
}
